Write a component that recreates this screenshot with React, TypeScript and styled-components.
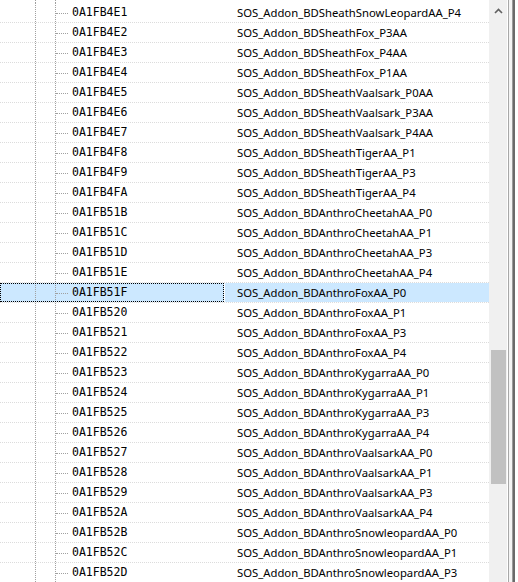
import React from 'react';
import styled, { createGlobalStyle } from 'styled-components';

const GlobalStyle = createGlobalStyle`
  html, body {
    margin: 0;
    padding: 0;
    background: #ffffff;
    overflow: hidden;
  }
`;

type FormRow = { id: string; name: string };

const rows: FormRow[] = [
  { id: '0A1FB4E1', name: 'SOS_Addon_BDSheathSnowLeopardAA_P4' },
  { id: '0A1FB4E2', name: 'SOS_Addon_BDSheathFox_P3AA' },
  { id: '0A1FB4E3', name: 'SOS_Addon_BDSheathFox_P4AA' },
  { id: '0A1FB4E4', name: 'SOS_Addon_BDSheathFox_P1AA' },
  { id: '0A1FB4E5', name: 'SOS_Addon_BDSheathVaalsark_P0AA' },
  { id: '0A1FB4E6', name: 'SOS_Addon_BDSheathVaalsark_P3AA' },
  { id: '0A1FB4E7', name: 'SOS_Addon_BDSheathVaalsark_P4AA' },
  { id: '0A1FB4F8', name: 'SOS_Addon_BDSheathTigerAA_P1' },
  { id: '0A1FB4F9', name: 'SOS_Addon_BDSheathTigerAA_P3' },
  { id: '0A1FB4FA', name: 'SOS_Addon_BDSheathTigerAA_P4' },
  { id: '0A1FB51B', name: 'SOS_Addon_BDAnthroCheetahAA_P0' },
  { id: '0A1FB51C', name: 'SOS_Addon_BDAnthroCheetahAA_P1' },
  { id: '0A1FB51D', name: 'SOS_Addon_BDAnthroCheetahAA_P3' },
  { id: '0A1FB51E', name: 'SOS_Addon_BDAnthroCheetahAA_P4' },
  { id: '0A1FB51F', name: 'SOS_Addon_BDAnthroFoxAA_P0' },
  { id: '0A1FB520', name: 'SOS_Addon_BDAnthroFoxAA_P1' },
  { id: '0A1FB521', name: 'SOS_Addon_BDAnthroFoxAA_P3' },
  { id: '0A1FB522', name: 'SOS_Addon_BDAnthroFoxAA_P4' },
  { id: '0A1FB523', name: 'SOS_Addon_BDAnthroKygarraAA_P0' },
  { id: '0A1FB524', name: 'SOS_Addon_BDAnthroKygarraAA_P1' },
  { id: '0A1FB525', name: 'SOS_Addon_BDAnthroKygarraAA_P3' },
  { id: '0A1FB526', name: 'SOS_Addon_BDAnthroKygarraAA_P4' },
  { id: '0A1FB527', name: 'SOS_Addon_BDAnthroVaalsarkAA_P0' },
  { id: '0A1FB528', name: 'SOS_Addon_BDAnthroVaalsarkAA_P1' },
  { id: '0A1FB529', name: 'SOS_Addon_BDAnthroVaalsarkAA_P3' },
  { id: '0A1FB52A', name: 'SOS_Addon_BDAnthroVaalsarkAA_P4' },
  { id: '0A1FB52B', name: 'SOS_Addon_BDAnthroSnowleopardAA_P0' },
  { id: '0A1FB52C', name: 'SOS_Addon_BDAnthroSnowleopardAA_P1' },
  { id: '0A1FB52D', name: 'SOS_Addon_BDAnthroSnowleopardAA_P3' },
];

const SELECTED_ID = '0A1FB51F';

const Window = styled('div')`
  display: flex;
  width: 518px;
  height: 582px;
  background: #ffffff;
  overflow: hidden;
`;

const ListArea = styled('div')`
  width: 490px;
  flex-shrink: 0;
  border-right: 1px solid #f0f0f0;
  box-sizing: border-box;
  display: flex;
  flex-direction: column;
`;

const TopStrip = styled('div')`
  height: 3px;
  flex-shrink: 0;
  display: flex;

  .ids {
    width: 225px;
    display: flex;
  }
  .guide {
    width: 19px;
    border-left: 1px dotted #a0a0a0;
  }
  .pad {
    width: 35px;
  }
`;

const Row = styled('div')`
  display: flex;
  height: 20px;
  flex-shrink: 0;
  box-sizing: border-box;
  border-bottom: 1px dotted #dcdcdc;
`;

const IdCell = styled('div')<{ $selected: boolean }>`
  width: 224px;
  flex-shrink: 0;
  display: flex;
  align-items: stretch;
  box-sizing: border-box;
  margin-right: 1px;
  background: ${(p) => (p.$selected ? '#cce8ff' : 'transparent')};
  outline: ${(p) => (p.$selected ? '1px dotted #000000' : 'none')};
  outline-offset: -1px;
`;

const Indent = styled('span')`
  width: 35px;
  flex-shrink: 0;
`;

const Guide = styled('span')`
  width: 19px;
  flex-shrink: 0;
  border-left: 1px dotted #a0a0a0;
`;

const Branch = styled('span')`
  width: 16px;
  flex-shrink: 0;
  border-left: 1px dotted #a0a0a0;
  display: flex;
  align-items: center;

  &::after {
    content: '';
    display: block;
    width: 12px;
    margin-top: 1px;
    border-top: 1px dotted #a0a0a0;
  }
`;

const IdText = styled('span')`
  font-family: 'DejaVu Sans Mono', 'Liberation Mono', monospace;
  font-size: 11.5px;
  color: #000000;
  line-height: 19px;
  white-space: nowrap;
`;

const NameCell = styled('div')<{ $selected: boolean }>`
  flex: 1;
  padding-left: 12px;
  background: ${(p) => (p.$selected ? '#cce8ff' : 'transparent')};
  font-family: 'Noto Sans', 'Open Sans', sans-serif;
  font-size: 11.3px;
  color: #000000;
  line-height: 19px;
  white-space: nowrap;
  overflow: hidden;
`;

const ScrollTrack = styled('div')`
  width: 17px;
  flex-shrink: 0;
  background: #f0f0f0;
  display: flex;
  flex-direction: column;
  align-items: center;
`;

const ArrowButton = styled('div')`
  width: 17px;
  height: 17px;
  display: flex;
  align-items: center;
  justify-content: center;
  color: #606060;
  margin-top: 2px;
`;

const Thumb = styled('div')`
  width: 15px;
  height: 134px;
  margin-top: 331px;
  margin-right: 1px;
  background: #c1c1c1;
`;

const FrameEdge = styled('div')`
  width: 11px;
  flex-shrink: 0;
  display: flex;

  span {
    display: block;
  }
  .gap1 {
    width: 1px;
  }
  .line1 {
    width: 1px;
    background: #a8a8a8;
  }
  .gap2 {
    width: 3px;
    background: #f4f4f4;
  }
  .line2 {
    width: 1px;
    background: #9a9a9a;
  }
  .line3 {
    width: 2px;
    background: #6a6a6a;
  }
`;

function UpArrow() {
  return (
    <svg width="9" height="6" viewBox="0 0 9 6">
      <path d="M1 5 L4.5 1.5 L8 5" fill="none" stroke="currentColor" strokeWidth="1.6" />
    </svg>
  );
}

function FormRowItem({ row }: { row: FormRow }) {
  const selected = row.id === SELECTED_ID;
  return (
    <Row>
      <IdCell $selected={selected}>
        <Indent />
        <Guide />
        <Branch />
        <IdText>{row.id}</IdText>
      </IdCell>
      <NameCell $selected={selected}>{row.name}</NameCell>
    </Row>
  );
}

export default function App() {
  return (
    <>
      <GlobalStyle />
      <Window>
        <ListArea>
          <TopStrip>
            <div className="ids">
              <span className="pad" />
              <span className="guide" />
              <span className="guide" />
            </div>
          </TopStrip>
          {rows.map((row) => (
            <FormRowItem key={row.id} row={row} />
          ))}
        </ListArea>
        <ScrollTrack>
          <ArrowButton>
            <UpArrow />
          </ArrowButton>
          <Thumb />
        </ScrollTrack>
        <FrameEdge>
          <span className="gap1" />
          <span className="line1" />
          <span className="gap2" />
          <span className="line2" />
          <span className="line3" />
        </FrameEdge>
      </Window>
    </>
  );
}
